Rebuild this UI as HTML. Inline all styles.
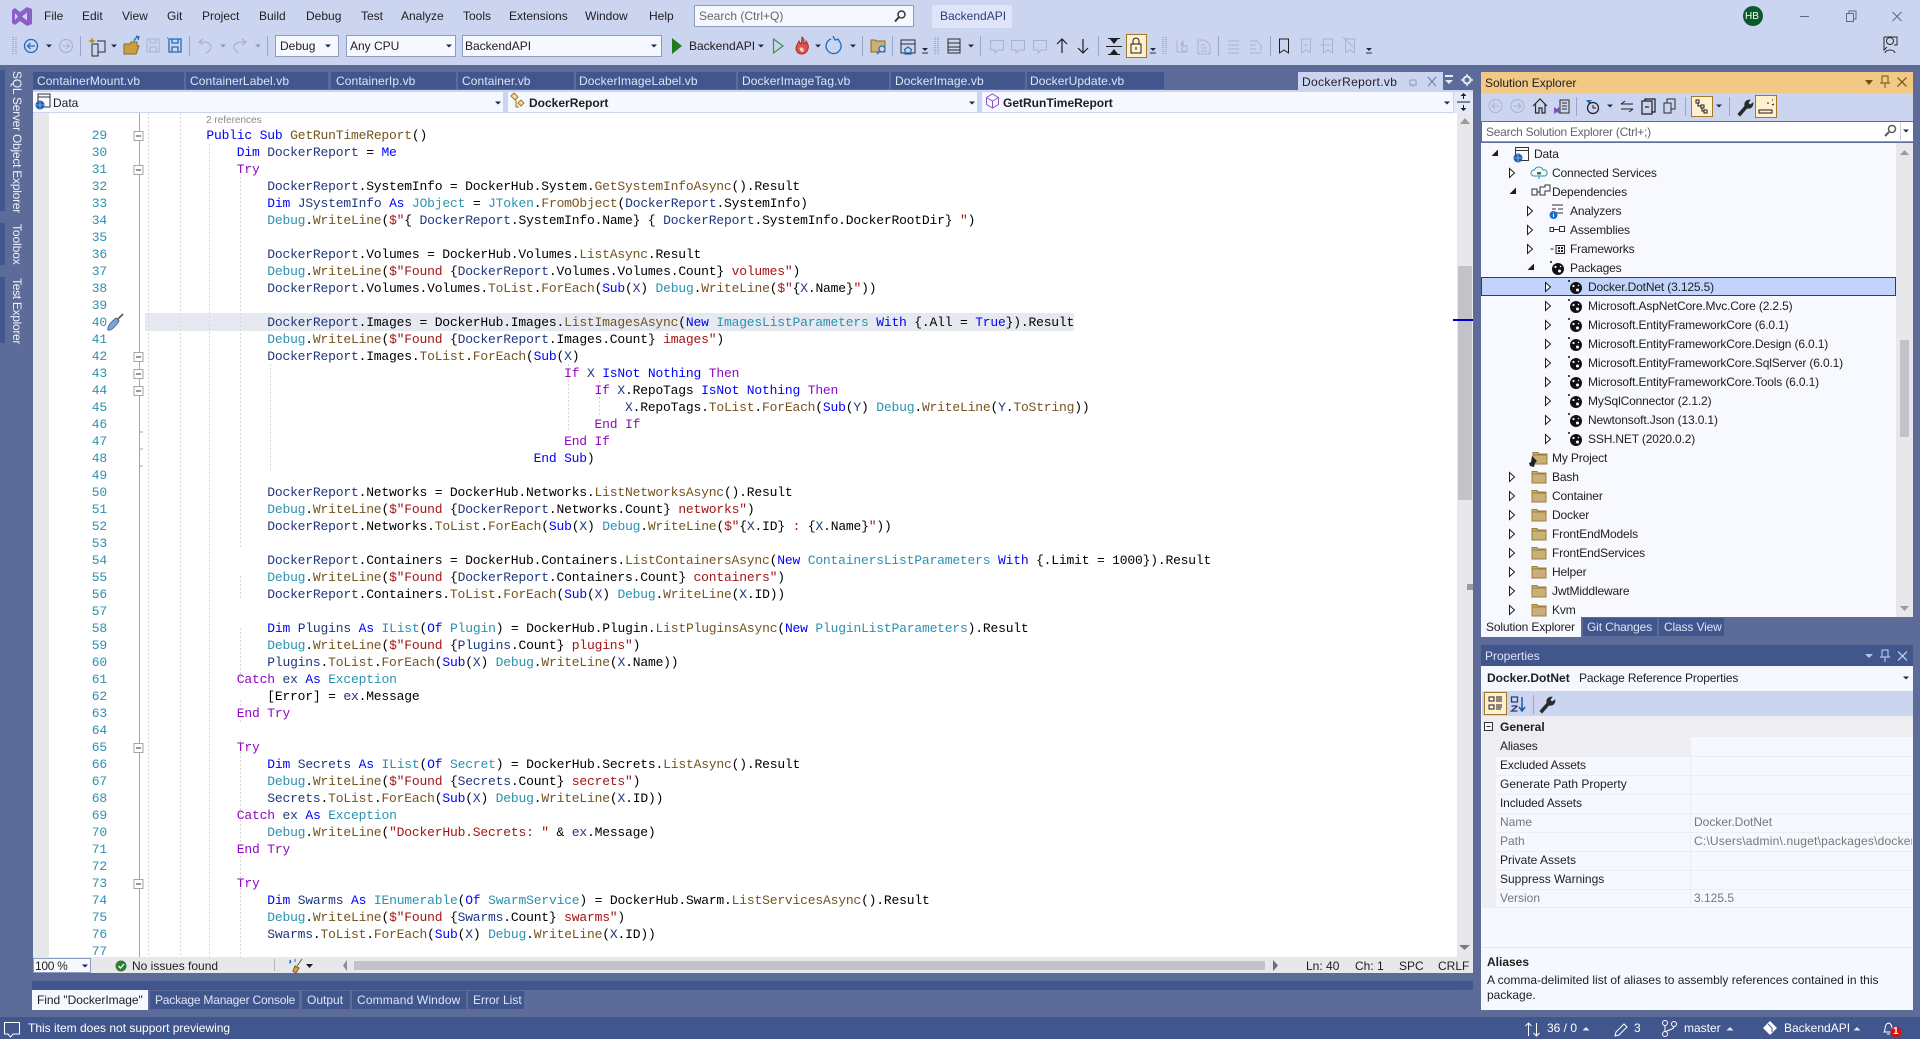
<!DOCTYPE html>
<html lang="en"><head><meta charset="utf-8"><title>Visual Studio</title>
<style>
html,body{margin:0;padding:0;width:1920px;height:1039px;overflow:hidden;background:#ccd5f0}
body{position:relative;font:12px/16px "Liberation Sans",sans-serif;color:#1e1e1e}
.b{position:absolute}
.t{position:absolute;white-space:nowrap;font:12px/16px "Liberation Sans",sans-serif;color:#1e1e1e}
.w{color:#fff}.l{color:#dfe5f5}.g{color:#777}
.n{letter-spacing:-.15px}.p{letter-spacing:.1px}
#ln,#code{position:absolute;top:127px;margin:0;font:13px/17px "Liberation Mono",monospace;letter-spacing:-.19px;white-space:pre;height:830px;overflow:hidden}
#ln{left:60px;width:47px;text-align:right;color:#2b91af}
#code{left:175.9px;width:1280px;color:#000}
.k{color:#00f}.c{color:#8f08c4}.y{color:#2b91af}.m{color:#74531f}.v{color:#1f377f}.s{color:#a31515}
.vt{position:absolute;writing-mode:vertical-rl;white-space:nowrap;left:9px;color:#eef1fa;font:12px/16px "Liberation Sans",sans-serif}
svg{position:absolute;left:0;top:0}
</style></head><body>
<!-- backgrounds -->
<div class="b" style="left:0;top:65px;width:1920px;height:952px;background:#5d6b99"></div>
<div class="b" style="left:0;top:1017px;width:1920px;height:22px;background:#40568d"></div>
<!-- left rail strips -->
<div class="b" style="left:0;top:70px;width:5px;height:141px;background:#40568d"></div>
<div class="b" style="left:0;top:223px;width:5px;height:42px;background:#40568d"></div>
<div class="b" style="left:0;top:277px;width:5px;height:66px;background:#40568d"></div>
<!-- doc tabs -->
<div class="b" style="left:33px;top:72px;width:151px;height:17px;background:#40568d"></div>
<div class="b" style="left:186px;top:72px;width:142px;height:17px;background:#40568d"></div>
<div class="b" style="left:331px;top:72px;width:125px;height:17px;background:#40568d"></div>
<div class="b" style="left:458px;top:72px;width:116px;height:17px;background:#40568d"></div>
<div class="b" style="left:576px;top:72px;width:160px;height:17px;background:#40568d"></div>
<div class="b" style="left:738px;top:72px;width:151px;height:17px;background:#40568d"></div>
<div class="b" style="left:891px;top:72px;width:134px;height:17px;background:#40568d"></div>
<div class="b" style="left:1027px;top:72px;width:137px;height:17px;background:#40568d"></div>
<div class="b" style="left:1298px;top:72px;width:145px;height:18px;background:#ccd5f0"></div>
<div class="b" style="left:33px;top:90px;width:1440px;height:2px;background:#ccd5f0"></div>
<!-- nav bar -->
<div class="b" style="left:33px;top:90px;width:1440px;height:23px;background:#ccd5f0"></div>
<div class="b" style="left:33px;top:92px;width:470px;height:20px;background:#f6f8ff"></div>
<div class="b" style="left:508px;top:92px;width:469px;height:20px;background:#f6f8ff"></div>
<div class="b" style="left:982px;top:92px;width:471px;height:20px;background:#f6f8ff"></div>
<div class="b" style="left:1454px;top:92px;width:19px;height:21px;background:#e4e9f9"></div>
<!-- editor -->
<div class="b" style="left:33px;top:113px;width:1424px;height:844px;background:#fff"></div>
<div class="b" style="left:33px;top:113px;width:16px;height:844px;background:#e6e7e8"></div>
<div class="b" style="left:145px;top:313px;width:929px;height:18px;background:#e6e9f0"></div>
<div class="b" style="left:1457px;top:113px;width:16px;height:844px;background:#e8e8ec"></div>
<div class="b" style="left:1458px;top:266px;width:14px;height:234px;background:#c2c3c9"></div>
<div class="b" style="left:1453px;top:319px;width:20px;height:2px;background:#0000cc"></div>
<div class="b" style="left:1467px;top:584px;width:6px;height:6px;background:#9a9aa2"></div>
<!-- editor status -->
<div class="b" style="left:33px;top:957px;width:1440px;height:16px;background:#e8e8ec"></div>
<div class="b" style="left:33px;top:958px;width:58px;height:15px;background:#f6f8ff;outline:1px solid #8e9bc0;outline-offset:-1px"></div>
<div class="b" style="left:354px;top:961px;width:911px;height:9px;background:#c2c3c9"></div>
<!-- bottom tool -->
<div class="b" style="left:32px;top:981px;width:1441px;height:9px;background:#40568d;overflow:hidden"><span class="t" style="left:5px;top:7px;color:#fff">Find "DockerImage"</span><span class="t" style="left:1409px;top:5px;color:#cfd7ee;font-size:11px">▯</span><span class="t" style="left:1425px;top:5px;color:#cfd7ee;font-size:11px">✕</span></div>
<div class="b" style="left:32px;top:990px;width:116px;height:20px;background:#f6f8ff"></div>
<div class="b" style="left:150px;top:991px;width:149px;height:18px;background:#40568d"></div>
<div class="b" style="left:302px;top:991px;width:48px;height:18px;background:#40568d"></div>
<div class="b" style="left:352px;top:991px;width:114px;height:18px;background:#40568d"></div>
<div class="b" style="left:468px;top:991px;width:56px;height:18px;background:#40568d"></div>
<!-- Solution explorer -->
<div class="b" style="left:1481px;top:72px;width:432px;height:21px;background:#f2c984"></div>
<div class="b" style="left:1481px;top:93px;width:432px;height:28px;background:#ccd5f0"></div>
<div class="b" style="left:1482px;top:122px;width:431px;height:20px;background:#fff;border-bottom:1px solid #8e9bc0;box-sizing:border-box"></div>
<div class="b" style="left:1481px;top:143px;width:415px;height:474px;background:#f7f9fe"></div>
<div class="b" style="left:1896px;top:143px;width:17px;height:474px;background:#e8e8ec"></div>
<div class="b" style="left:1900px;top:340px;width:9px;height:97px;background:#c2c3c9"></div>
<div class="b" style="left:1481px;top:277px;width:415px;height:19px;background:#c2d4fc;border:1px solid #2a3c80;box-sizing:border-box"></div>
<div class="b" style="left:1481px;top:617px;width:100px;height:20px;background:#f6f8ff"></div>
<div class="b" style="left:1583px;top:618px;width:74px;height:18px;background:#40568d"></div>
<div class="b" style="left:1659px;top:618px;width:65px;height:18px;background:#40568d"></div>
<!-- Properties -->
<div class="b" style="left:1481px;top:645px;width:432px;height:21px;background:#40568d"></div>
<div class="b" style="left:1481px;top:666px;width:432px;height:344px;background:#f6f8ff"></div>
<div class="b" style="left:1482px;top:691px;width:431px;height:25px;background:#ccd5f0"></div>
<div class="b" style="left:1482px;top:716px;width:431px;height:21px;background:#eeeef2"></div>
<div class="b" style="left:1482px;top:737px;width:14px;height:171px;background:#eeeef2"></div>
<div class="b" style="left:1496px;top:737px;width:194px;height:19px;background:#eeeef2"></div>
<div class="b" style="left:1690px;top:737px;width:1px;height:171px;background:#eeeef2"></div>
<div class="b" style="left:1496px;top:756px;width:417px;height:1px;background:#eeeef2"></div>
<div class="b" style="left:1496px;top:775px;width:417px;height:1px;background:#eeeef2"></div>
<div class="b" style="left:1496px;top:794px;width:417px;height:1px;background:#eeeef2"></div>
<div class="b" style="left:1496px;top:813px;width:417px;height:1px;background:#eeeef2"></div>
<div class="b" style="left:1496px;top:832px;width:417px;height:1px;background:#eeeef2"></div>
<div class="b" style="left:1496px;top:851px;width:417px;height:1px;background:#eeeef2"></div>
<div class="b" style="left:1496px;top:870px;width:417px;height:1px;background:#eeeef2"></div>
<div class="b" style="left:1496px;top:889px;width:417px;height:1px;background:#eeeef2"></div>
<div class="b" style="left:1482px;top:907px;width:431px;height:1px;background:#eeeef2"></div>
<div class="b" style="left:1482px;top:947px;width:431px;height:1px;background:#e6e7ee"></div>
<!-- top boxes -->
<div class="b" style="left:694px;top:5px;width:220px;height:22px;background:#f6f8ff;outline:1px solid #8e9bc0;outline-offset:-1px"></div>
<div class="b" style="left:932px;top:5px;width:80px;height:23px;background:#dee5f9"></div>
<div class="b" style="left:275px;top:35px;width:64px;height:22px;background:#f6f8ff;outline:1px solid #8e9bc0;outline-offset:-1px"></div>
<div class="b" style="left:346px;top:35px;width:110px;height:22px;background:#f6f8ff;outline:1px solid #8e9bc0;outline-offset:-1px"></div>
<div class="b" style="left:462px;top:35px;width:200px;height:22px;background:#f6f8ff;outline:1px solid #8e9bc0;outline-offset:-1px"></div>
<div class="b" style="left:1126px;top:34px;width:21px;height:24px;background:#fff0d0;outline:1px solid #a17b2b;outline-offset:-1px"></div>
<div class="b" style="left:1691px;top:96px;width:22px;height:21px;background:#fff0d0;outline:1px solid #a17b2b;outline-offset:-1px"></div>
<div class="b" style="left:1755px;top:95px;width:22px;height:23px;background:#fff0d0;outline:1px solid #a17b2b;outline-offset:-1px"></div>
<div class="b" style="left:1484px;top:692px;width:23px;height:23px;background:#fff0d0;outline:1px solid #a17b2b;outline-offset:-1px"></div>

<svg width="1920" height="1039" viewBox="0 0 1920 1039" fill="none">
<defs>
<g id="pk"><circle r="6" fill="#111"/><circle cx="-7" cy="-7" r="1" fill="#111"/><circle cx="-2.500" cy="-2" r="1.100" fill="#fff"/><circle cx="2.500" cy="-2.500" r=".7" fill="#fff"/><circle cx="1.500" cy="2" r="1.500" fill="#fff"/></g>
<g id="fo"><path d="M-7-5.500h5l1 1.500h8v10h-14z" fill="#c9b07a" stroke="#9c7f34"/><path d="M-7-3h14" stroke="#9c7f34"/></g>
<path id="tr" d="M-2.500-4.500 2.500 0-2.500 4.500Z" fill="#fff" stroke="#1e1e1e"/>
<path id="tx" d="M3-3.500V3H-3.500Z" fill="#1e1e1e"/>
<path id="dr" d="M-3-1.500H3L0 1.500Z" fill="#1b2a4a"/>
<path id="dg" d="M-3-1.500H3L0 1.500Z" fill="#8d97b8"/>
<g id="ub"><path d="M-3-2H3L0 1Z" fill="#1b2a4a"/><path d="M-3 3H3" stroke="#1b2a4a"/></g>
<g id="fb"><rect x="-4.500" y="-4.500" width="9" height="9" fill="#fff" stroke="#a5a5a5"/><path d="M-2.500 0H2.500" stroke="#333"/></g>
<g id="cm"><path d="M-6.500-5.500H6.500V4H1L-2 7V4H-6.500Z" stroke="#a9b2cf"/></g>
<path id="up" d="M-3.500 1.500H3.500L0-2Z" fill="#e4e8f6"/>
</defs>
<!-- guides -->
<g stroke="#d8d8d8" stroke-dasharray="2 2">
<path d="M148.500 113V957M180.500 113V957"/>
<path d="M209.500 144V957"/>
<path d="M240.500 177V548M240.500 576V600M240.500 628V686M240.500 700V722M240.500 740V957"/>
<path d="M270.500 364V472M568.500 364V432M599.500 381V415"/>
</g>
<path d="M139.500 113V957" stroke="#a5a5a5"/>
<path d="M139 432h4M139 449h4M139 466h4" stroke="#a5a5a5"/>
<use href="#fb" x="138.500" y="136"/><use href="#fb" x="138.500" y="170"/><use href="#fb" x="138.500" y="357"/><use href="#fb" x="138.500" y="374"/><use href="#fb" x="138.500" y="391"/><use href="#fb" x="138.500" y="748"/><use href="#fb" x="138.500" y="884"/>
<!-- screwdriver -->
<path d="M117 320 123 314" stroke="#555" stroke-width="1.600"/><path d="M108 330c-1-3 2-7 8-12l3 3c-4 6-8 10-11 9z" fill="#7fa6d8" stroke="#45689b"/>
<!-- VS logo -->
<g transform="translate(3 0)"><path d="M12 8 17 12 24 7 29 9V24L24 26 17 21 12 25 9 23V10Z" fill="#8a5fc8"/><path d="M12 13 15 16.500 12 20ZM24 12.500V20.500L19 16.500Z" fill="#ccd5f0"/></g>
<!-- search icon -->
<circle cx="901.500" cy="14.500" r="3.500" stroke="#3a3a3a" stroke-width="1.500"/><path d="M899 17 895 21.500" stroke="#3a3a3a" stroke-width="2"/>
<!-- avatar & window -->
<circle cx="1753" cy="16" r="10" fill="#0b5a2c"/>
<path d="M1800 16.500h9" stroke="#5a6a8a"/><path d="M1846.500 13.500h7v8h-7zM1849 13.500v-2.500h7v8h-2.500" stroke="#5a6a8a"/><path d="M1892.500 12 1901.500 21M1901.500 12 1892.500 21" stroke="#5a6a8a"/>
<!-- toolbar 1 left -->
<path d="M13 37V54M16 37V54" stroke="#7d88ad" stroke-dasharray="1 1"/>
<circle cx="31" cy="46" r="6.500" stroke="#1c6bbd" stroke-width="1.300"/><path d="M35 46H28M30.500 43 27.500 46 30.500 49" stroke="#1c6bbd" stroke-width="1.200"/>
<use href="#dr" x="49" y="46"/>
<circle cx="66" cy="46" r="6.500" stroke="#a9b2cf" stroke-width="1.200"/><path d="M62 46H69M66.500 43 69.500 46 66.500 49" stroke="#a9b2cf"/>
<path d="M80.500 36V56M189.500 36V56M267.500 36V56M862.500 36V56M892.500 36V56M980.500 36V56M1098.500 36V56M1218.500 36V56M1270.500 36V56" stroke="#9aa6c8"/>
<path d="M92 44h6v12h-6zM97 41h8v11h-7" stroke="#2a2a2a"/><path d="M92 37l1 3 3 1-3 1-1 3-1-3-3-1 3-1z" fill="#b08b2c"/>
<use href="#dr" x="114" y="46"/>
<path d="M124 44h6l1-2h6v4h2l-3 8h-12z" fill="#c89e45" stroke="#8a6a1e"/><path d="M134 41c1-3 3-4 5-4M136 36l3 1-1 3" stroke="#1c6bbd" stroke-width="1.300"/>
<path d="M147 39h12v13h-12zM150 39v4h6v-4M150 52v-5h6v5" stroke="#a9b2cf"/>
<path d="M169 39h12v13h-12zM172 39v4h6v-4M172 52v-5h6v5" stroke="#1c6bbd" stroke-width="1.300"/><path d="M168 38h-1" stroke="#1c6bbd"/>
<path d="M203 39l-4 3 4 3M200 42h4c5 0 7 3 7 5s-2 5-5 6" stroke="#a9b2cf" stroke-width="1.200"/>
<use href="#dg" x="223" y="46"/>
<path d="M242 39l4 3-4 3M245 42h-4c-5 0-7 3-7 5s2 5 5 6" stroke="#a9b2cf" stroke-width="1.200"/>
<use href="#dg" x="258" y="46"/>
<use href="#dr" x="328" y="46"/><use href="#dr" x="449" y="46"/><use href="#dr" x="654" y="46"/>
<!-- toolbar run -->
<path d="M672 38 682 46 672 54Z" fill="#1f7a1f"/><use href="#dr" x="761" y="46"/>
<path d="M773.500 39 783 46 773.500 53Z" stroke="#3f9142" stroke-width="1.200"/>
<path d="M802 37c4 3 0 5 3 7 1-1 1-2 1-3 2 3 3 5 2 8-1 3-3 5-6 5s-6-2-6-6c0-3 2-4 3-7 1 1 1 3 2 3 1-2 1-5 1-7z" fill="#d9534f" stroke="#a82c2c"/><path d="M802 52c-2-1-3-3-2-5 1 1 2 1 2 0 1 1 3 3 1 5z" fill="#f5c8c0"/>
<use href="#dr" x="818" y="46"/>
<path d="M831 39a7.500 7.500 0 1 0 7 1M833 36l2 4 4-1" stroke="#1c6bbd" stroke-width="1.300"/><use href="#dr" x="853" y="46"/>
<path d="M871 40h4l1 1h9v11h-14z" fill="#c9b07a" stroke="#8a6a1e"/><circle cx="882" cy="49" r="3" fill="#ccd5f0" stroke="#1c6bbd" stroke-width="1.200"/><path d="M880 51l-3 3" stroke="#1c6bbd" stroke-width="1.500"/>
<path d="M901 40h14v13h-14zM901 44h14" stroke="#2a2a2a"/><path d="M904 50l4-3 4 3M905 50v4h6v-4" stroke="#1c6bbd" stroke-width="1.200"/>
<use href="#ub" x="925" y="50"/>
<path d="M935 37V55M938 37V55" stroke="#7d88ad" stroke-dasharray="1 1"/>
<path d="M948 39h12v14h-12zM948 43h12M948 47h12M948 50h12" stroke="#2a2a2a"/>
<use href="#dr" x="971" y="46"/>
<use href="#cm" x="997" y="46"/><use href="#cm" x="1018" y="46"/><use href="#cm" x="1040" y="46"/>
<path d="M1062 53V39M1057 44 1062 39 1067 44M1083 39V53M1078 48 1083 53 1088 48" stroke="#1e1e1e" stroke-width="1.200"/>
<path d="M1106 46.500h16M1108 38.500h12M1108 54.500h12" stroke="#1e1e1e"/><path d="M1110 39h8l-4 5zM1110 54h8l-4-5z" fill="#1e1e1e"/>
<path d="M1131 44h10v9h-10zM1133 44v-3a3 3 0 0 1 6 0v3M1136 47v3" stroke="#1e1e1e"/>
<use href="#ub" x="1153" y="50"/>
<path d="M1163 37V55M1166 37V55" stroke="#7d88ad" stroke-dasharray="1 1"/>
<path d="M1177 40v12h10M1180 45l3-4v6M1182 42v9h5v-5h-4" stroke="#a9b2cf"/>
<path d="M1198 40h7l5 5v9h-12zM1201 45h4M1201 48h6M1201 51h6" stroke="#a9b2cf"/>
<path d="M1228 41h11M1228 45h11M1228 49h11M1228 53h11" stroke="#a9b2cf"/>
<path d="M1250 41h7l4 4v6M1250 45h6M1250 49h6M1250 53h11" stroke="#a9b2cf"/>
<path d="M1279.500 39h9v14l-4.500-3-4.500 3z" stroke="#1e1e1e"/><path d="M1301.500 39h9v14l-4.500-3-4.500 3zM1303 45h5M1323.500 39h9v14l-4.500-3-4.500 3zM1320 45h10M1345.500 39h9v14l-4.500-3-4.500 3zM1343 37l10 10" stroke="#a9b2cf"/>
<use href="#ub" x="1369" y="50"/>
<circle cx="1890" cy="41" r="3.500" stroke="#2a2a2a"/><path d="M1884 37h13v8h-3M1884 37v13l3-3M1885 53c1-4 9-4 10 0" stroke="#2a2a2a"/>
<!-- doc tabs icons -->
<path d="M1410 80h6v5h-6zM1409 85h8M1413 85v2" stroke="#8e99bd"/>
<path d="M1428 77l8 9M1436 77l-8 9" stroke="#6c7aa8"/>
<path d="M1445 76h8" stroke="#e8ecf8" stroke-width="2"/><path d="M1445 80h8l-4 4z" fill="#e8ecf8"/>
<circle cx="1467" cy="80" r="3.500" stroke="#e8ecf8" stroke-width="2"/><path d="M1467 74v2M1467 84v2M1461 80h2M1471 80h2" stroke="#e8ecf8" stroke-width="1.500"/>
<!-- nav icons -->
<rect x="38" y="94" width="12" height="13" stroke="#333" fill="#f6f8ff"/><path d="M38 97h12" stroke="#333"/><circle cx="40" cy="105" r="4.500" fill="#1f5fae"/><path d="M36 105h8M40 101v8" stroke="#bcd3ef" stroke-width=".6"/>
<use href="#dr" x="498" y="103"/>
<path d="M511 96l3-3 4 4-3 3zM518 103l3-3 3 3-3 3zM516 100v7h3" stroke="#a47a2a" fill="#f2dca0"/>
<use href="#dr" x="972" y="103"/>
<path d="M992.500 94l6 3.500v7l-6 3.500-6-3.500v-7zM986.500 97.500l6 3.500 6-3.500M992.500 101v7" stroke="#8a55c2"/>
<use href="#dr" x="1447" y="103"/>
<path d="M1457 102h13" stroke="#1e1e1e"/><path d="M1463.500 93l-3 3h6zM1463.500 111l-3-3h6z" fill="#1e1e1e"/><path d="M1463.500 96v3M1463.500 108v-3" stroke="#1e1e1e"/>
<!-- editor scroll arrows -->
<path d="M1460 124l5-6 5 6z" fill="#9a9aa2"/><path d="M1459 945h11l-5.500 5z" fill="#7a7a82"/>
<!-- status bar -->
<use href="#dr" x="85" y="966"/>
<circle cx="121" cy="966" r="5.500" fill="#2e7d32"/><path d="M118.500 966l2 2 3.500-4" stroke="#fff" stroke-width="1.300"/>
<path d="M274.500 959V971" stroke="#b5b5bb"/>
<path d="M293 971l2-5 4 2-3 5zM297 966l5-7" stroke="#7a5a1e" fill="#d2a93a"/><path d="M290 960l1 2-1 1zM295 959v3" stroke="#1c6bbd"/>
<path d="M306 964h7l-3.500 4z" fill="#1e1e1e"/>
<path d="M347 960v11l-4-5.500z" fill="#8a8a92"/><path d="M1273 960v11l5-5.500z" fill="#6c6c74"/>
<!-- preview icon -->
<path d="M4.500 1022.500H19.500V1034H13L10.500 1037 8 1034H4.500Z" stroke="#fff"/>
<!-- SE title -->
<path d="M1865 80h8l-4 5z" fill="#6e5310"/><path d="M1882 76h6v7h-6zM1880 83h10M1885 83v5" stroke="#6e5310"/><path d="M1897.500 77.500l9 9M1906.500 77.500l-9 9" stroke="#6e5310" stroke-width="1.200"/>
<!-- SE toolbar -->
<circle cx="1495.500" cy="106" r="6.500" stroke="#a9b2cf"/><path d="M1499 106h-7M1495 103l-3 3 3 3" stroke="#a9b2cf"/>
<circle cx="1517.500" cy="106" r="6.500" stroke="#a9b2cf"/><path d="M1514 106h7M1518 103l3 3-3 3" stroke="#a9b2cf"/>
<path d="M1533 106l7-7 7 7M1535.500 104v9h3.500v-5h3v5h3v-9" stroke="#2a2a2a" stroke-width="1.200"/>
<path d="M1560 100h9v13h-9zM1562 103h5M1562 106h5M1562 109h5" stroke="#2a2a2a"/><path d="M1554 107l3 2 3-3v8l-3-2-3 2z" fill="#7d4fc0"/>
<path d="M1576.500 97V116M1685.500 97V116M1729.500 97V116" stroke="#9aa6c8"/>
<path d="M1586 100h6l-3 4z" fill="#1c6bbd"/><circle cx="1593" cy="108" r="5.500" stroke="#1e1e1e" stroke-width="1.200"/><path d="M1593 105v3h3" stroke="#1e1e1e"/>
<use href="#dr" x="1610" y="106"/>
<path d="M1621 104h12M1625 101l-4 3M1633 109h-12M1629 112l4-3" stroke="#1e1e1e"/>
<path d="M1642 101h10v13h-10zM1645 101v-2h10v13h-3M1645 107h4" stroke="#1e1e1e" stroke-width="1.200"/>
<path d="M1664 103h7v10h-7zM1667 103v-4h8v10h-4" stroke="#2a2a2a"/>
<path d="M1696 100h3v3h-3zM1701 105h3v3h-3zM1704 110h3v3h-3zM1698 103v3h3M1702 108v3h2" stroke="#1e1e1e"/>
<use href="#dr" x="1719" y="106"/>
<path d="M1738 114l7-8c-1-3 1-6 5-6l-2 3 2 2 3-2c0 4-3 6-6 5l-7 8z" fill="#2a2a2a" stroke="#2a2a2a" stroke-width=".8"/>
<path d="M1759 110h13v3h-13zM1772 105l2-1M1768 102v2M1772 100h1" stroke="#1e1e1e"/>
<!-- search box right -->
<circle cx="1892" cy="129" r="3.500" stroke="#5a5a5a" stroke-width="1.500"/><path d="M1889 132l-4 4" stroke="#5a5a5a" stroke-width="2"/><path d="M1900.500 122V142" stroke="#c8cee0"/><use href="#dr" x="1906" y="131"/>
<!-- tree -->
<g>
<use href="#tx" x="1495" y="153"/><use href="#tr" x="1512" y="173"/><use href="#tx" x="1513" y="191"/><use href="#tr" x="1530" y="211"/><use href="#tr" x="1530" y="230"/><use href="#tr" x="1530" y="249"/><use href="#tx" x="1531" y="267"/>
<use href="#tr" x="1548" y="287"/><use href="#tr" x="1548" y="306"/><use href="#tr" x="1548" y="325"/><use href="#tr" x="1548" y="344"/><use href="#tr" x="1548" y="363"/><use href="#tr" x="1548" y="382"/><use href="#tr" x="1548" y="401"/><use href="#tr" x="1548" y="420"/><use href="#tr" x="1548" y="439"/>
<use href="#tr" x="1512" y="477"/><use href="#tr" x="1512" y="496"/><use href="#tr" x="1512" y="515"/><use href="#tr" x="1512" y="534"/><use href="#tr" x="1512" y="553"/><use href="#tr" x="1512" y="572"/><use href="#tr" x="1512" y="591"/><use href="#tr" x="1512" y="610"/>
<use href="#pk" x="1558" y="269"/>
<use href="#pk" x="1576" y="288"/><use href="#pk" x="1576" y="307"/><use href="#pk" x="1576" y="326"/><use href="#pk" x="1576" y="345"/><use href="#pk" x="1576" y="364"/><use href="#pk" x="1576" y="383"/><use href="#pk" x="1576" y="402"/><use href="#pk" x="1576" y="421"/><use href="#pk" x="1576" y="440"/>
<use href="#fo" x="1539" y="477"/><use href="#fo" x="1539" y="496"/><use href="#fo" x="1539" y="515"/><use href="#fo" x="1539" y="534"/><use href="#fo" x="1539" y="553"/><use href="#fo" x="1539" y="572"/><use href="#fo" x="1539" y="591"/><use href="#fo" x="1539" y="610"/>
<use href="#fo" x="1540" y="458"/><path d="M1532 456l5 5-2 2-1 4-4-1-1-3 2-1z" fill="#222"/>
</g>
<path d="M1515.500 147.500h13v13h-13zM1515.500 150.500h13" stroke="#333"/><circle cx="1518" cy="158" r="4.500" fill="#1f5fae"/><path d="M1514 158h8M1518 154v8" stroke="#bcd3ef" stroke-width=".6"/>
<path d="M1533.500 176a3 3 0 0 1 1-6 4.500 4.500 0 0 1 8.500 0 3 3 0 0 1 2 6zM1539 176v3" stroke="#2b91af"/><path d="M1537 172h4v2.500h-4z" fill="#2e7d52"/>
<path d="M1532 189h5v6h-5zM1540 187h5v-2h5v6h-5v4h-5zM1537 192h3" stroke="#333"/>
<path d="M1552 205h11M1552 209h4M1558 209h5M1556 213h7" stroke="#333"/><circle cx="1553.500" cy="215" r="4" fill="#1f6cc0"/><path d="M1553.500 214v3M1553.500 212.500v.5" stroke="#fff"/>
<path d="M1550 227.500h3.500v4h-3.500zM1559.500 226.500h5v5h-5zM1553.500 229.500h6" stroke="#333"/>
<path d="M1550.500 249h3M1556 245.500h8.500v8h-8.500z" stroke="#222"/><path d="M1558 247h2v2h-2zM1561 250h2v2h-2zM1561 247h2v2h-2zM1558 250h2v2h-2z" fill="#222"/>
<!-- props title -->
<path d="M1865 654h8l-4 4z" fill="#b9c4e2"/><path d="M1882 650h6v7h-6zM1880 657h10M1885 657v5" stroke="#cfd7ee"/><path d="M1898 651.500l9 9M1907 651.500l-9 9" stroke="#cfd7ee" stroke-width="1.200"/>
<use href="#dr" x="1906" y="678"/>
<!-- props toolbar -->
<path d="M1489 697h5v4h-5zM1489 705h5v4h-5zM1496 697h6M1496 699h6M1496 701h6M1496 705h6M1496 707h6M1496 709h5" stroke="#1e1e1e"/>
<path d="M1511.500 697h6v5h-6zM1511.500 706h6M1517.500 706l-6 5h6" stroke="#283b6a" stroke-width="1.300"/><path d="M1522 697v13M1519 707l3 4 3-4" stroke="#1459b3" stroke-width="1.500"/>
<path d="M1533.500 695V714" stroke="#9aa6c8"/>
<path d="M1540 711l7-8c-1-3 1-6 5-6l-2 3 2 2 3-2c0 4-3 6-6 5l-7 8z" fill="#2a2a2a" stroke="#2a2a2a" stroke-width=".8"/>
<rect x="1484.500" y="722.500" width="8" height="8" stroke="#333" fill="#f6f8ff"/><path d="M1486.500 726.500h4" stroke="#333"/>
<!-- SE tree scroll arrows -->
<path d="M1900 155l4.500-5 4.500 5z" fill="#9a9aa2"/><path d="M1900 606h9l-4.500 5z" fill="#9a9aa2"/>
<!-- status bar icons -->
<path d="M1528.500 1036V1023M1525.500 1026l3-3 3 3M1536.500 1023V1036M1533.500 1033l3 3 3-3" stroke="#fff"/>
<use href="#up" x="1586" y="1029"/><use href="#up" x="1730" y="1029"/><use href="#up" x="1857" y="1029"/>
<path d="M1615 1036l1-4 8-8 3 3-8 8z" stroke="#fff"/>
<circle cx="1665" cy="1023" r="2.500" stroke="#fff"/><circle cx="1665" cy="1034" r="2.500" stroke="#fff"/><circle cx="1674" cy="1024" r="2.500" stroke="#fff"/><path d="M1665 1025.500v6M1674 1026.500c0 3-5 3-8 5" stroke="#fff"/>
<path d="M1770 1021l7 7-7 7-7-7z" fill="#fff"/><path d="M1768 1024l4 4M1772 1028v4" stroke="#40568d"/>
<path d="M1884 1032c2-2 0-8 4.500-9 4.500 1 3 7 4.500 9zM1887 1034h3" stroke="#fff"/>
<circle cx="1896" cy="1032" r="5.500" fill="#d01212"/>
</svg>

<!-- menu -->
<span class="t" style="left:44px;top:8px">File</span>
<span class="t" style="left:82px;top:8px">Edit</span>
<span class="t" style="left:122px;top:8px">View</span>
<span class="t" style="left:167px;top:8px">Git</span>
<span class="t" style="left:202px;top:8px">Project</span>
<span class="t" style="left:259px;top:8px">Build</span>
<span class="t" style="left:306px;top:8px">Debug</span>
<span class="t" style="left:361px;top:8px">Test</span>
<span class="t" style="left:401px;top:8px">Analyze</span>
<span class="t" style="left:463px;top:8px">Tools</span>
<span class="t" style="left:509px;top:8px">Extensions</span>
<span class="t" style="left:585px;top:8px">Window</span>
<span class="t" style="left:649px;top:8px">Help</span>
<span class="t" style="left:699px;top:8px;color:#666">Search (Ctrl+Q)</span>
<span class="t" style="left:940px;top:8px;color:#2c3e78">BackendAPI</span>
<span class="t w" style="left:1745px;top:9px;font-size:10px">HB</span>
<!-- toolbar text -->
<span class="t" style="left:280px;top:38px">Debug</span>
<span class="t" style="left:350px;top:38px">Any CPU</span>
<span class="t" style="left:465px;top:38px">BackendAPI</span>
<span class="t" style="left:689px;top:38px">BackendAPI</span>
<!-- doc tabs -->
<span class="t l p" style="left:37px;top:73px">ContainerMount.vb</span>
<span class="t l p" style="left:190px;top:73px">ContainerLabel.vb</span>
<span class="t l p" style="left:336px;top:73px">ContainerIp.vb</span>
<span class="t l p" style="left:462px;top:73px">Container.vb</span>
<span class="t l p" style="left:579px;top:73px">DockerImageLabel.vb</span>
<span class="t l p" style="left:742px;top:73px">DockerImageTag.vb</span>
<span class="t l p" style="left:895px;top:73px">DockerImage.vb</span>
<span class="t l p" style="left:1030px;top:73px">DockerUpdate.vb</span>
<span class="t" style="left:1302px;top:74px;letter-spacing:.35px">DockerReport.vb</span>
<!-- nav -->
<span class="t" style="left:53px;top:95px">Data</span>
<span class="t" style="left:529px;top:95px;font-weight:bold">DockerReport</span>
<span class="t" style="left:1003px;top:95px;font-weight:bold">GetRunTimeReport</span>
<span class="t" style="left:206px;top:113px;font-size:10px;color:#8a8a8a">2 references</span>
<!-- left rail -->
<span class="vt" style="top:71px;letter-spacing:-.24px">SQL Server Object Explorer</span>
<span class="vt" style="top:224px;letter-spacing:-.1px">Toolbox</span>
<span class="vt" style="top:278px;letter-spacing:-.3px">Test Explorer</span>

<pre id="ln">29
30
31
32
33
34
35
36
37
38
39
40
41
42
43
44
45
46
47
48
49
50
51
52
53
54
55
56
57
58
59
60
61
62
63
64
65
66
67
68
69
70
71
72
73
74
75
76
77</pre>
<pre id="code">    <span class="k">Public Sub</span> <span class="m">GetRunTimeReport</span>()
        <span class="k">Dim</span> <span class="v">DockerReport</span> = <span class="k">Me</span>
        <span class="c">Try</span>
            <span class="v">DockerReport</span>.SystemInfo = DockerHub.System.<span class="m">GetSystemInfoAsync</span>().Result
            <span class="k">Dim</span> <span class="v">JSystemInfo</span> <span class="k">As</span> <span class="y">JObject</span> = <span class="y">JToken</span>.<span class="m">FromObject</span>(<span class="v">DockerReport</span>.SystemInfo)
            <span class="y">Debug</span>.<span class="m">WriteLine</span>(<span class="s">$"</span>{ <span class="v">DockerReport</span>.SystemInfo.Name} { <span class="v">DockerReport</span>.SystemInfo.DockerRootDir}<span class="s"> "</span>)

            <span class="v">DockerReport</span>.Volumes = DockerHub.Volumes.<span class="m">ListAsync</span>.Result
            <span class="y">Debug</span>.<span class="m">WriteLine</span>(<span class="s">$"Found </span>{<span class="v">DockerReport</span>.Volumes.Volumes.Count}<span class="s"> volumes"</span>)
            <span class="v">DockerReport</span>.Volumes.Volumes.<span class="m">ToList</span>.<span class="m">ForEach</span>(<span class="k">Sub</span>(<span class="v">X</span>) <span class="y">Debug</span>.<span class="m">WriteLine</span>(<span class="s">$"</span>{<span class="v">X</span>.Name}<span class="s">"</span>))

            <span class="v">DockerReport</span>.Images = DockerHub.Images.<span class="m">ListImagesAsync</span>(<span class="k">New</span> <span class="y">ImagesListParameters</span> <span class="k">With</span> {.All = <span class="k">True</span>}).Result
            <span class="y">Debug</span>.<span class="m">WriteLine</span>(<span class="s">$"Found </span>{<span class="v">DockerReport</span>.Images.Count}<span class="s"> images"</span>)
            <span class="v">DockerReport</span>.Images.<span class="m">ToList</span>.<span class="m">ForEach</span>(<span class="k">Sub</span>(<span class="v">X</span>)
                                                   <span class="c">If</span> <span class="v">X</span> <span class="k">IsNot Nothing</span> <span class="c">Then</span>
                                                       <span class="c">If</span> <span class="v">X</span>.RepoTags <span class="k">IsNot Nothing</span> <span class="c">Then</span>
                                                           <span class="v">X</span>.RepoTags.<span class="m">ToList</span>.<span class="m">ForEach</span>(<span class="k">Sub</span>(<span class="v">Y</span>) <span class="y">Debug</span>.<span class="m">WriteLine</span>(<span class="v">Y</span>.<span class="m">ToString</span>))
                                                       <span class="c">End If</span>
                                                   <span class="c">End If</span>
                                               <span class="k">End Sub</span>)

            <span class="v">DockerReport</span>.Networks = DockerHub.Networks.<span class="m">ListNetworksAsync</span>().Result
            <span class="y">Debug</span>.<span class="m">WriteLine</span>(<span class="s">$"Found </span>{<span class="v">DockerReport</span>.Networks.Count}<span class="s"> networks"</span>)
            <span class="v">DockerReport</span>.Networks.<span class="m">ToList</span>.<span class="m">ForEach</span>(<span class="k">Sub</span>(<span class="v">X</span>) <span class="y">Debug</span>.<span class="m">WriteLine</span>(<span class="s">$"</span>{<span class="v">X</span>.ID}<span class="s"> : </span>{<span class="v">X</span>.Name}<span class="s">"</span>))

            <span class="v">DockerReport</span>.Containers = DockerHub.Containers.<span class="m">ListContainersAsync</span>(<span class="k">New</span> <span class="y">ContainersListParameters</span> <span class="k">With</span> {.Limit = 1000}).Result
            <span class="y">Debug</span>.<span class="m">WriteLine</span>(<span class="s">$"Found </span>{<span class="v">DockerReport</span>.Containers.Count}<span class="s"> containers"</span>)
            <span class="v">DockerReport</span>.Containers.<span class="m">ToList</span>.<span class="m">ForEach</span>(<span class="k">Sub</span>(<span class="v">X</span>) <span class="y">Debug</span>.<span class="m">WriteLine</span>(<span class="v">X</span>.ID))

            <span class="k">Dim</span> <span class="v">Plugins</span> <span class="k">As</span> <span class="y">IList</span>(<span class="k">Of</span> <span class="y">Plugin</span>) = DockerHub.Plugin.<span class="m">ListPluginsAsync</span>(<span class="k">New</span> <span class="y">PluginListParameters</span>).Result
            <span class="y">Debug</span>.<span class="m">WriteLine</span>(<span class="s">$"Found </span>{<span class="v">Plugins</span>.Count}<span class="s"> plugins"</span>)
            <span class="v">Plugins</span>.<span class="m">ToList</span>.<span class="m">ForEach</span>(<span class="k">Sub</span>(<span class="v">X</span>) <span class="y">Debug</span>.<span class="m">WriteLine</span>(<span class="v">X</span>.Name))
        <span class="c">Catch</span> <span class="v">ex</span> <span class="k">As</span> <span class="y">Exception</span>
            [Error] = <span class="v">ex</span>.Message
        <span class="c">End Try</span>

        <span class="c">Try</span>
            <span class="k">Dim</span> <span class="v">Secrets</span> <span class="k">As</span> <span class="y">IList</span>(<span class="k">Of</span> <span class="y">Secret</span>) = DockerHub.Secrets.<span class="m">ListAsync</span>().Result
            <span class="y">Debug</span>.<span class="m">WriteLine</span>(<span class="s">$"Found </span>{<span class="v">Secrets</span>.Count}<span class="s"> secrets"</span>)
            <span class="v">Secrets</span>.<span class="m">ToList</span>.<span class="m">ForEach</span>(<span class="k">Sub</span>(<span class="v">X</span>) <span class="y">Debug</span>.<span class="m">WriteLine</span>(<span class="v">X</span>.ID))
        <span class="c">Catch</span> <span class="v">ex</span> <span class="k">As</span> <span class="y">Exception</span>
            <span class="y">Debug</span>.<span class="m">WriteLine</span>(<span class="s">"DockerHub.Secrets: "</span> &amp; <span class="v">ex</span>.Message)
        <span class="c">End Try</span>

        <span class="c">Try</span>
            <span class="k">Dim</span> <span class="v">Swarms</span> <span class="k">As</span> <span class="y">IEnumerable</span>(<span class="k">Of</span> <span class="y">SwarmService</span>) = DockerHub.Swarm.<span class="m">ListServicesAsync</span>().Result
            <span class="y">Debug</span>.<span class="m">WriteLine</span>(<span class="s">$"Found </span>{<span class="v">Swarms</span>.Count}<span class="s"> swarms"</span>)
            <span class="v">Swarms</span>.<span class="m">ToList</span>.<span class="m">ForEach</span>(<span class="k">Sub</span>(<span class="v">X</span>) <span class="y">Debug</span>.<span class="m">WriteLine</span>(<span class="v">X</span>.ID))
</pre>

<!-- editor status -->
<span class="t" style="left:35px;top:958px;letter-spacing:-.3px">100 %</span>
<span class="t" style="left:132px;top:958px">No issues found</span>
<span class="t" style="left:1306px;top:958px">Ln: 40</span>
<span class="t" style="left:1355px;top:958px">Ch: 1</span>
<span class="t" style="left:1399px;top:958px">SPC</span>
<span class="t" style="left:1438px;top:958px">CRLF</span>
<!-- bottom tabs -->
<span class="t" style="left:37px;top:992px;letter-spacing:-.05px">Find "DockerImage"</span>
<span class="t l" style="left:155px;top:992px;letter-spacing:-.2px">Package Manager Console</span>
<span class="t l" style="left:307px;top:992px">Output</span>
<span class="t l" style="left:357px;top:992px;letter-spacing:.15px">Command Window</span>
<span class="t l" style="left:473px;top:992px">Error List</span>
<!-- status -->
<span class="t w" style="left:28px;top:1020px">This item does not support previewing</span>
<span class="t w" style="left:1547px;top:1020px">36 / 0</span>
<span class="t w" style="left:1634px;top:1020px">3</span>
<span class="t w" style="left:1684px;top:1020px">master</span>
<span class="t w" style="left:1784px;top:1020px">BackendAPI</span>
<span class="t w" style="left:1893px;top:1025px;font-size:10px;line-height:14px;font-weight:bold">1</span>
<!-- SE -->
<span class="t" style="left:1485px;top:75px">Solution Explorer</span>
<span class="t" style="left:1486px;top:124px;color:#666;letter-spacing:-.25px">Search Solution Explorer (Ctrl+;)</span>
<span class="t n" style="left:1534px;top:146px">Data</span>
<span class="t n" style="left:1552px;top:165px">Connected Services</span>
<span class="t n" style="left:1552px;top:184px">Dependencies</span>
<span class="t n" style="left:1570px;top:203px">Analyzers</span>
<span class="t n" style="left:1570px;top:222px">Assemblies</span>
<span class="t n" style="left:1570px;top:241px">Frameworks</span>
<span class="t n" style="left:1570px;top:260px">Packages</span>
<span class="t n" style="left:1588px;top:279px">Docker.DotNet (3.125.5)</span>
<span class="t n" style="left:1588px;top:298px">Microsoft.AspNetCore.Mvc.Core (2.2.5)</span>
<span class="t n" style="left:1588px;top:317px">Microsoft.EntityFrameworkCore (6.0.1)</span>
<span class="t n" style="left:1588px;top:336px">Microsoft.EntityFrameworkCore.Design (6.0.1)</span>
<span class="t n" style="left:1588px;top:355px">Microsoft.EntityFrameworkCore.SqlServer (6.0.1)</span>
<span class="t n" style="left:1588px;top:374px">Microsoft.EntityFrameworkCore.Tools (6.0.1)</span>
<span class="t n" style="left:1588px;top:393px">MySqlConnector (2.1.2)</span>
<span class="t n" style="left:1588px;top:412px">Newtonsoft.Json (13.0.1)</span>
<span class="t n" style="left:1588px;top:431px">SSH.NET (2020.0.2)</span>
<span class="t n" style="left:1552px;top:450px">My Project</span>
<span class="t n" style="left:1552px;top:469px">Bash</span>
<span class="t n" style="left:1552px;top:488px">Container</span>
<span class="t n" style="left:1552px;top:507px">Docker</span>
<span class="t n" style="left:1552px;top:526px">FrontEndModels</span>
<span class="t n" style="left:1552px;top:545px">FrontEndServices</span>
<span class="t n" style="left:1552px;top:564px">Helper</span>
<span class="t n" style="left:1552px;top:583px">JwtMiddleware</span>
<span class="t n" style="left:1552px;top:602px">Kvm</span>
<span class="t n" style="left:1486px;top:619px">Solution Explorer</span>
<span class="t l n" style="left:1587px;top:619px">Git Changes</span>
<span class="t l n" style="left:1664px;top:619px">Class View</span>
<!-- props -->
<span class="t l" style="left:1485px;top:648px">Properties</span>
<span class="t" style="left:1487px;top:670px;font-weight:bold">Docker.DotNet</span>
<span class="t n" style="left:1579px;top:670px">Package Reference Properties</span>
<span class="t" style="left:1500px;top:719px;font-weight:bold">General</span>
<span class="t n" style="left:1500px;top:738px">Aliases</span>
<span class="t n" style="left:1500px;top:757px">Excluded Assets</span>
<span class="t" style="left:1500px;top:776px">Generate Path Property</span>
<span class="t n" style="left:1500px;top:795px">Included Assets</span>
<span class="t g" style="left:1500px;top:814px">Name</span>
<span class="t g" style="left:1500px;top:833px">Path</span>
<span class="t" style="left:1500px;top:852px">Private Assets</span>
<span class="t" style="left:1500px;top:871px">Suppress Warnings</span>
<span class="t g" style="left:1500px;top:890px">Version</span>
<span class="t g" style="left:1694px;top:814px">Docker.DotNet</span>
<span class="t g" style="left:1694px;top:833px;width:218px;overflow:hidden;letter-spacing:.2px">C:\Users\admin\.nuget\packages\docker</span>
<span class="t g" style="left:1694px;top:890px">3.125.5</span>
<span class="t" style="left:1487px;top:954px;font-weight:bold">Aliases</span>
<span class="t" style="left:1487px;top:972px">A comma-delimited list of aliases to assembly references contained in this</span>
<span class="t" style="left:1487px;top:987px">package.</span>
</body></html>
